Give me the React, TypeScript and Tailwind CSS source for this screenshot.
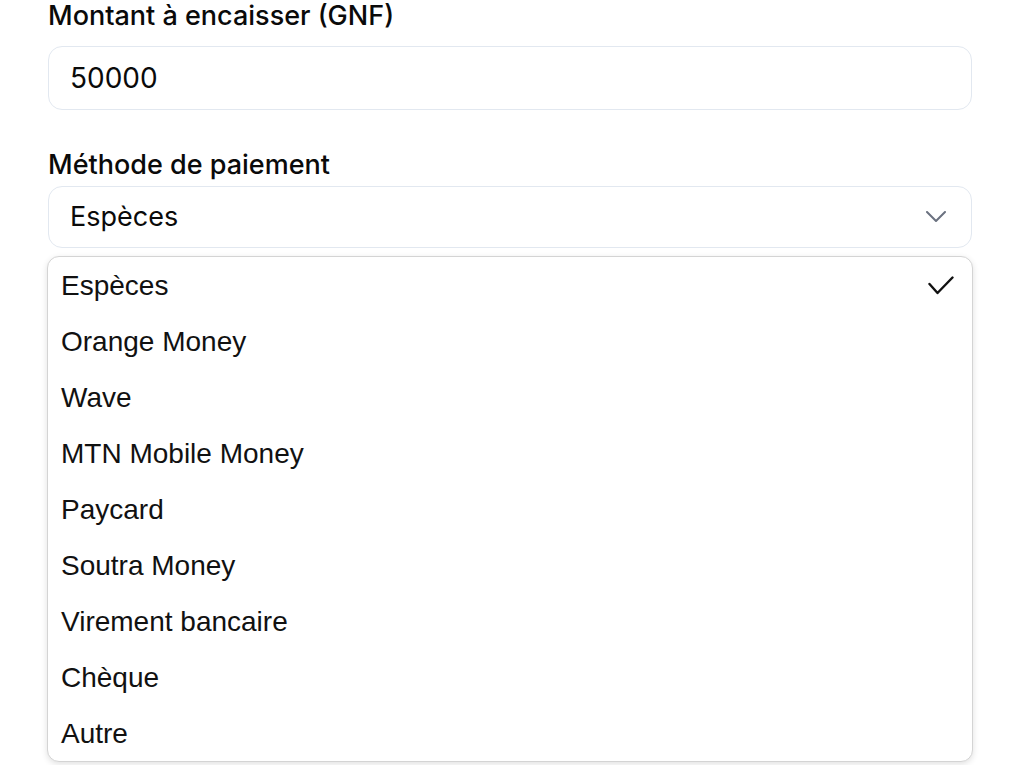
import React from "react";

const items = [
  "Espèces",
  "Orange Money",
  "Wave",
  "MTN Mobile Money",
  "Paycard",
  "Soutra Money",
  "Virement bancaire",
  "Chèque",
  "Autre",
];

export default function App() {
  return (
    <div className="w-[1020px] h-[765px] bg-white overflow-hidden [font-family:Inter,'Liberation_Sans',sans-serif]">
      <div className="ml-[48px] w-[924px]">
        <div className="h-[31px] pt-[1px] leading-[30px] text-[27px] font-medium text-[#0a0a0a]">
          Montant à encaisser (GNF)
        </div>
        <div className="mt-[15px] h-[64px] rounded-[14px] border border-[#e2e8f0] flex items-center pl-[21px] text-[28px] text-[#0a0a0a]">
          50000
        </div>
        <div className="mt-[40px] h-[30px] leading-[30px] text-[27px] font-medium text-[#0a0a0a]">
          Méthode de paiement
        </div>
        <div className="mt-[6px] h-[62px] rounded-[14px] border border-[#e2e8f0] flex items-center justify-between pl-[21px] pr-[25px] text-[27px] text-[#0a0a0a]">
          <span>Espèces</span>
          <svg width="20" height="12" viewBox="0 0 20 12" fill="none">
            <polyline points="1,1 10,10 19,1" stroke="#6b7280" strokeWidth="2" strokeLinecap="round" strokeLinejoin="round" />
          </svg>
        </div>
      </div>
      <div className="ml-[47px] mt-[8px] w-[926px] rounded-[12px] border border-[#d4d4d4] bg-white shadow-[0_2px_6px_rgba(0,0,0,0.12)] [font-family:'Liberation_Sans',Arial,sans-serif]">
        {items.map((it, i) => (
          <div key={it} className="h-[56px] flex items-center justify-between pl-[13px] pr-[18px] text-[28px] text-[#111111]">
            <span className="relative top-[1px]">{it}</span>
            {i === 0 && (
              <svg width="26" height="19" viewBox="0 0 26 19" fill="none">
                <polyline points="1.5,8 9.5,17 24.5,1.5" stroke="#111111" strokeWidth="2.4" strokeLinecap="round" strokeLinejoin="round" />
              </svg>
            )}
          </div>
        ))}
      </div>
    </div>
  );
}
